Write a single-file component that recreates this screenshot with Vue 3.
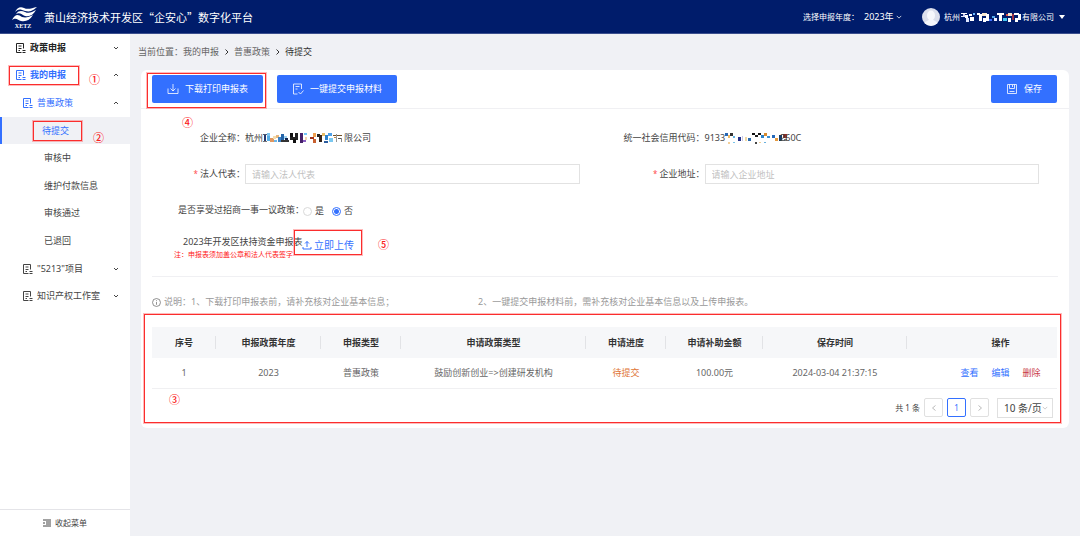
<script setup>
import { ref } from 'vue'

const year = ref('2023年')
const legal = ref('')
const address = ref('')
const enjoyed = ref('no')
const pageSize = ref('10 条/页')

const menu = [
  { label: '政策申报', level: 1, arrow: 'down' },
  { label: '我的申报', level: 1, arrow: 'up', active: true, mark: '①' },
  { label: '普惠政策', level: 2, arrow: 'up', active: true },
  { label: '待提交', level: 3, active: true, selected: true, mark: '②' },
  { label: '审核中', level: 3 },
  { label: '维护付款信息', level: 3 },
  { label: '审核通过', level: 3 },
  { label: '已退回', level: 3 },
  { label: '"5213"项目', level: 2, arrow: 'down' },
  { label: '知识产权工作室', level: 2, arrow: 'down' },
]

const columns = [
  { title: '序号', name: 'c-index' },
  { title: '申报政策年度', name: 'c-year' },
  { title: '申报类型', name: 'c-type' },
  { title: '申请政策类型', name: 'c-policy' },
  { title: '申请进度', name: 'c-state' },
  { title: '申请补助金额', name: 'c-amount' },
  { title: '保存时间', name: 'c-time' },
  { title: '操作', name: 'c-action' },
]

const nameMask = [
  [0, 2, 5, 1, '#555a70'], [1, 3, 2, 6, '#26386e'], [0, 9, 4, 1, '#777'], [4, 1, 3, 3, '#7cc4ee'], [4, 4, 3, 5, '#58aee6'], [7, 6, 4, 4, '#e0975f'], [10, 4, 3, 3, '#f4dcae'], [11, 8, 3, 2, '#6db6e8'],
  [13, 3, 3, 3, '#e8b87e'], [15, 5, 3, 5, '#3d82c4'], [18, 2, 3, 8, '#2464a8'], [21, 4, 3, 3, '#9fd3f2'], [22, 6, 3, 4, '#14244e'], [18, 8, 8, 2, '#333'],
  [27, 1, 3, 5, '#111'], [32, 1, 3, 5, '#222'], [27, 5, 8, 3, '#222'], [30, 7, 3, 4, '#111'], [37, 1, 3, 10, '#45206a'], [41, 1, 3, 2, '#6fc3f7'], [40, 8, 3, 2, '#8a5fc0'], [42, 5, 2, 3, '#f3d2b0'],
  [50, 1, 3, 4, '#f0a050'], [47, 5, 4, 2, '#a03018'], [50, 7, 3, 4, '#c8602f'], [54, 2, 3, 3, '#222'], [56, 3, 3, 7, '#34241b'], [59, 1, 3, 3, '#e8bc66'], [62, 3, 3, 5, '#2c82cd'], [65, 1, 4, 3, '#4da0e8'], [61, 9, 4, 2, '#2c5da0'], [66, 6, 4, 4, '#7ac8f0'],
  [70, 3, 9, 1, '#725128'], [73, 2, 1, 8, '#999'], [75, 6, 4, 1, '#555'], [78, 6, 1, 4, '#888'], [71, 5, 2, 1, '#c08a4a'],
]
const codeMask = [
  [0, 1, 3, 3, '#2866b2'], [3, 3, 2, 3, '#f0bb63'], [5, 1, 3, 3, '#333'], [8, 4, 2, 2, '#62b5e8'], [3, 10, 2, 2, '#f4cf99'], [8, 10, 2, 1, '#7ac4ea'],
  [13, 5, 3, 4, '#24328b'], [17, 4, 1, 5, '#c9c9e8'], [20, 5, 2, 4, '#f0d9a5'], [23, 6, 3, 3, '#2b6cae'], [27, 1, 3, 2, '#111'], [30, 3, 3, 2, '#222'], [33, 1, 3, 2, '#111'],
  [36, 3, 3, 3, '#2c82c8'], [39, 1, 3, 3, '#d98b2d'], [42, 4, 3, 2, '#3d90d0'], [30, 10, 2, 2, '#444'], [34, 10, 2, 1, '#f0cf92'], [39, 10, 2, 1, '#67afdd'],
  [47, 3, 3, 3, '#2468ba'], [50, 6, 3, 3, '#e79a3e'], [54, 3, 3, 6, '#183b66'], [58, 2, 4, 4, '#8e2e25'], [59, 7, 3, 2, '#777'],
]
const userMask = [
  [0, 2, 6, 1, '#fff'], [2, 3, 2, 3, '#cce'], [0, 5, 5, 1, '#dfe7ff'], [4, 4, 3, 3, '#fff'], [5, 7, 3, 4, '#dfe7ff'], [8, 3, 3, 2, '#fff'], [9, 6, 4, 4, '#fff'], [12, 2, 2, 2, '#68b8ff'],
  [16, 2, 3, 2, '#fff'], [18, 3, 3, 7, '#fff'], [21, 2, 5, 3, '#f8e8cf'], [22, 7, 3, 4, '#fff'], [25, 3, 3, 7, '#fff'], [28, 8, 3, 2, '#3f70ff'],
  [31, 5, 3, 2, '#51a7e8'], [33, 7, 3, 3, '#eef'], [36, 2, 7, 2, '#fff'], [38, 3, 3, 7, '#fff'], [42, 7, 4, 3, '#44c5ee'], [45, 3, 3, 2, '#d94f48'],
  [47, 2, 4, 3, '#f3e4d0'], [47, 7, 3, 4, '#fff'], [51, 3, 2, 6, '#9a3044'], [53, 2, 5, 2, '#fff'], [54, 7, 3, 4, '#fff'], [57, 3, 3, 6, '#fff'],
]
</script>

<template>
  <div class="page">
    <header class="topbar">
      <svg class="logo" viewBox="0 0 26 24" aria-label="XETZ">
        <path d="M3 6C5 2 8 0 12 2C16 4 20 2 25 1C23 3 21 4 19 5C16 6 13 5 10 4C7 3 5 4 3 6Z" fill="#fff" />
        <path d="M4 8C7 4 10 5 13 6C17 8 20 6 24 4C21 9 18 11 13 10C10 9 8 6 4 8Z" fill="#fff" />
        <path d="M0 14C3 8 6 8 10 11C14 12 17 11 21 9C18 14 14 16 9 15C6 14 4 11 0 14Z" fill="#fff" />
        <text x="11" y="22" text-anchor="middle" class="logo-text">XETZ</text>
      </svg>
      <h1>萧山经济技术开发区“企安心”数字化平台</h1>
      <label class="year-label" for="year">选择申报年度：</label>
      <span class="picker year">
        <select id="year" v-model="year"><option>2023年</option></select>
        <svg viewBox="0 0 8 8"><path d="M1 2.5L4 5.5L7 2.5" /></svg>
      </span>
      <svg class="avatar" viewBox="0 0 18 18">
        <circle cx="9" cy="9" r="9" fill="#dcdfec" />
        <ellipse cx="9" cy="7.500" rx="4" ry="5" fill="#f6f7fc" />
        <path d="M2.500 15C4 12.500 7 13 7 11H11C11 13 14 12.500 15.500 15A9 9 0 0 1 2.500 15Z" fill="#f6f7fc" />
      </svg>
      <button class="user" type="button">
        杭州<svg class="mask user-mask" viewBox="0 0 60 12"><rect v-for="(r, i) in userMask" :key="i" :x="r[0]" :y="r[1]" :width="r[2]" :height="r[3]" :fill="r[4]" /></svg>有限公司
        <svg class="caret" viewBox="0 0 6 4"><path d="M0 0H6L3 4Z" fill="#fff" /></svg>
      </button>
    </header>

    <div class="body">
      <aside class="sidebar">
        <nav class="menu">
          <a
            v-for="item in menu"
            :key="item.label"
            href="#"
            class="item"
            :class="['level-' + item.level, { active: item.active, selected: item.selected }]"
          >
            <svg v-if="item.level < 3" class="doc" viewBox="0 0 11 12">
              <path d="M8.500 6.500V1.500H1.500V10.500H6.500M3.500 4H6.500M3.500 6.500H6.500M3.500 8.500H5M7.500 8.500H10.500M7.500 10.500H10.500" />
            </svg>
            <span>{{ item.label }}</span>
            <svg v-if="item.arrow" class="arrow" viewBox="0 0 8 8">
              <path :d="item.arrow === 'down' ? 'M2 3L4 5L6 3' : 'M2 5L4 3L6 5'" />
            </svg>
            <i v-if="item.mark" class="frame"></i>
            <b v-if="item.mark" class="mark">{{ item.mark }}</b>
          </a>
        </nav>
        <button class="collapse" type="button">
          <svg viewBox="0 0 8 8"><path d="M0 1H8M3 3H8M3 5H8M0 7H8M1.500 3L.5 4L1.500 5" /></svg>
          收起菜单
        </button>
      </aside>

      <main>
        <nav class="crumbs">
          <span>当前位置：</span><a href="#">我的申报</a>
          <svg viewBox="0 0 6 8"><path d="M1.500 1.500L4 4L1.500 6.500" /></svg>
          <a href="#">普惠政策</a>
          <svg viewBox="0 0 6 8"><path d="M1.500 1.500L4 4L1.500 6.500" /></svg>
          <span class="here">待提交</span>
        </nav>

        <section class="card">
          <div class="toolbar">
            <div class="anchor download">
              <button type="button" class="primary">
                <svg viewBox="0 0 12 12"><path d="M6 1V8M3.500 5.500L6 8L8.500 5.500M1 5.500V10.500H11V5.500" /></svg>
                下载打印申报表
              </button>
              <i class="frame"></i>
              <b class="mark">④</b>
            </div>
            <button type="button" class="primary submit">
              <svg viewBox="0 0 12 12"><path d="M9.500 6V1H1.500V11H5.500M3.500 3.500H7.500M3.500 6H5.500M6.500 9L8.500 11L11.500 7.500" /></svg>
              一键提交申报材料
            </button>
            <button type="button" class="primary save">
              <svg viewBox="0 0 12 12"><path d="M1.500 1.500H10.500V10.500H1.500ZM3.500 1.500V5.500H8.500V1.500M6.500 2V4M3.500 8.500H8.500" /></svg>
              保存
            </button>
          </div>

          <form class="form" @submit.prevent>
            <div class="fields">
              <span class="label">企业全称：</span>
              <span class="value">杭州<svg class="mask name-mask" viewBox="0 0 81 12"><rect v-for="(r, i) in nameMask" :key="i" :x="r[0]" :y="r[1]" :width="r[2]" :height="r[3]" :fill="r[4]" /></svg>限公司</span>
              <span class="label">统一社会信用代码：</span>
              <span class="value">9133<svg class="mask code-mask" viewBox="0 0 62 12"><rect v-for="(r, i) in codeMask" :key="i" :x="r[0]" :y="r[1]" :width="r[2]" :height="r[3]" :fill="r[4]" /></svg>260C</span>
              <label class="label" for="legal"><em>*</em>法人代表：</label>
              <input id="legal" v-model="legal" type="text" placeholder="请输入法人代表" />
              <label class="label" for="address"><em>*</em>企业地址：</label>
              <input id="address" v-model="address" type="text" placeholder="请输入企业地址" />
            </div>
            <fieldset class="choice">
              <legend>是否享受过招商一事一议政策：</legend>
              <label><input v-model="enjoyed" type="radio" name="enjoyed" value="yes" />是</label>
              <label><input v-model="enjoyed" type="radio" name="enjoyed" value="no" />否</label>
            </fieldset>
            <div class="upload-row">
              <div class="upload-text">
                <span>2023年开发区扶持资金申报表</span>
                <small>注：申报表须加盖公章和法人代表签字</small>
              </div>
              <div class="anchor upload">
                <button type="button">
                  <svg viewBox="0 0 10 10"><path d="M5 7V1.500M3 3.500L5 1.500L7 3.500M1 7V9H9V7" /></svg>
                  立即上传
                </button>
                <i class="frame"></i>
                <b class="mark">⑤</b>
              </div>
            </div>
          </form>

          <p class="notes">
            <svg viewBox="0 0 10 10"><circle cx="5" cy="5" r="4.400" /><path d="M5 4.500V7.500M5 2.500V3.500" /></svg>
            <span class="note-one">说明：1、下载打印申报表前，请补充核对企业基本信息；</span>
            <span>2、一键提交申报材料前，需补充核对企业基本信息以及上传申报表。</span>
          </p>

          <div class="anchor list">
            <table>
              <colgroup><col v-for="c in columns" :key="c.name" :class="c.name" /></colgroup>
              <thead>
                <tr><th v-for="c in columns" :key="c.name" scope="col">{{ c.title }}</th></tr>
              </thead>
              <tbody>
                <tr>
                  <td>1</td>
                  <td>2023</td>
                  <td>普惠政策</td>
                  <td>鼓励创新创业=&gt;创建研发机构</td>
                  <td class="pending">待提交</td>
                  <td>100.00元</td>
                  <td>2024-03-04 21:37:15</td>
                  <td>
                    <div class="actions"><a href="#">查看</a><a href="#">编辑</a><a href="#" class="danger">删除</a></div>
                  </td>
                </tr>
              </tbody>
            </table>
            <div class="pager">
              <span>共 1 条</span>
              <button type="button" aria-label="上一页" disabled><svg viewBox="0 0 8 8"><path d="M5.500 1.500L2.500 4L5.500 6.500" /></svg></button>
              <button type="button" class="current">1</button>
              <button type="button" aria-label="下一页" disabled><svg viewBox="0 0 8 8"><path d="M2.500 1.500L5.500 4L2.500 6.500" /></svg></button>
              <span class="picker size">
                <select v-model="pageSize" aria-label="每页条数"><option>10 条/页</option></select>
                <svg viewBox="0 0 8 8"><path d="M1 2.5L4 5.5L7 2.5" /></svg>
              </span>
            </div>
            <i class="frame"></i>
            <b class="mark">③</b>
          </div>
        </section>
      </main>
    </div>
  </div>
</template>

<style>
body {
  background: #f0f1f5;
}
</style>

<style scoped>
* {
  box-sizing: border-box;
}
.page {
  display: flex;
  flex-direction: column;
  min-height: 100vh;
  font: 9px/14px "Noto Sans", "Noto Sans CJK SC", sans-serif;
  color: #444;
  background: #f0f1f5;
}
button,
input,
select {
  font: inherit;
  color: inherit;
  margin: 0;
}
button {
  padding: 0;
  border: 0;
  background: none;
}
a {
  color: inherit;
  text-decoration: none;
}
svg {
  flex: none;
  fill: none;
  stroke: currentColor;
}
.mask,
.avatar,
.logo,
.caret {
  stroke: none;
}
.topbar {
  display: flex;
  align-items: center;
  height: 34px;
  padding: 0 15px 0 12px;
  border-bottom: 1px solid #3b4f8e;
  background: #001c6b;
  color: #fff;
}
.logo {
  width: 26px;
  height: 24px;
  margin-top: 2px;
}
.logo-text {
  font: bold 6px "Liberation Serif", serif;
  fill: #fff;
}
h1 {
  flex: 1;
  margin: 0 0 0 6px;
  font: 11px/16px "Noto Sans CJK SC", sans-serif;
}
.year-label,
.user {
  font-size: 8px;
}
.picker {
  position: relative;
  display: flex;
  align-items: center;
}
.picker select {
  appearance: none;
  padding: 0;
  border: 0;
  outline: 0;
  background: none;
}
.picker svg {
  position: absolute;
  right: 0;
  width: 6px;
  height: 6px;
  pointer-events: none;
}
.year {
  width: 38px;
  margin: 0 20px 0 5px;
}
.year select {
  width: 100%;
}
.avatar {
  width: 18px;
  height: 18px;
  margin-right: 4px;
}
.user {
  display: flex;
  align-items: center;
}
.mask {
  height: 12px;
}
.user-mask {
  width: 62px;
}
.caret {
  width: 6px;
  height: 4px;
  margin-left: 5px;
}
.body {
  display: flex;
  flex: 1;
}
.sidebar {
  display: flex;
  flex-direction: column;
  flex: none;
  width: 130px;
  background: #fff;
}
.menu {
  display: grid;
  grid-auto-rows: 1fr;
  height: 276px;
}
.item {
  position: relative;
  display: flex;
  align-items: center;
  padding: 0 10px 0 15px;
}
.doc {
  width: 11px;
  height: 12px;
  margin-right: 4px;
}
.level-1 {
  font-weight: 600;
  color: #222;
}
.level-2 {
  padding-left: 22px;
}
.level-3 {
  padding-left: 44px;
}
.item.active {
  color: #3370ff;
}
.item.selected {
  padding-left: 40px;
  border-left: 2px solid #3370ff;
  background: #f0f1f5;
}
.arrow {
  width: 8px;
  height: 8px;
  margin-left: auto;
  color: #444;
}
.frame {
  position: absolute;
  border: 1px solid #fb2d2d;
  box-shadow: 0 0 0 1px rgba(255, 60, 60, 0.35);
  pointer-events: none;
}
.mark {
  position: absolute;
  font: 500 11px/12px "Noto Sans CJK SC", sans-serif;
  color: #fb2020;
}
.level-1 .frame {
  left: 9px;
  top: 4px;
  width: 70px;
  height: 19px;
}
.level-1 .mark {
  left: 89px;
  top: 11px;
}
.level-3 .frame {
  left: 31px;
  top: 4px;
  width: 49px;
  height: 20px;
}
.level-3 .mark {
  left: 91px;
  top: 14px;
}
.collapse {
  display: flex;
  align-items: center;
  gap: 4px;
  height: 27px;
  margin-top: auto;
  padding-left: 43px;
  border-top: 1px solid #e4e4e8;
  font-size: 8px;
}
.collapse svg {
  width: 8px;
  height: 8px;
}
main {
  flex: 1;
  min-width: 0;
  padding: 11px 11px 0;
}
.crumbs {
  display: flex;
  align-items: center;
  margin-left: -3px;
  color: #666;
}
.crumbs svg {
  width: 6px;
  height: 8px;
  margin: 0 4px 0 5px;
  color: #333;
}
.here {
  color: #333;
}
.card {
  margin-top: 11px;
  padding-bottom: 5px;
  border-radius: 6px;
  background: #fff;
}
.toolbar {
  display: flex;
  padding: 5px 12px 5px 11px;
  border-bottom: 1px solid #f0f0f3;
}
.anchor {
  position: relative;
}
.primary {
  display: flex;
  align-items: center;
  justify-content: center;
  gap: 6px;
  height: 28px;
  padding: 0 15px;
  border-radius: 2px;
  background: #3370ff;
  color: #fff;
}
.primary svg {
  width: 12px;
  height: 12px;
  stroke-width: 0.8;
}
.submit {
  margin-left: 14px;
}
.save {
  margin-left: auto;
}
.download .frame {
  inset: -2px -3px -5px -5px;
}
.download .mark {
  left: 30px;
  top: 41px;
}
.form {
  margin: 0 11px;
  padding: 19px 0 15px;
  border-bottom: 1px solid #f0f0f3;
}
.fields {
  display: grid;
  grid-template-columns: 93px 1fr 125px 1fr;
  grid-auto-rows: 20px;
  row-gap: 16px;
  align-items: center;
  padding-right: 19px;
}
.label {
  text-align: right;
}
.label em {
  margin-right: 2px;
  font-size: 8px;
  font-style: normal;
  color: #ff4d4f;
}
.value {
  display: flex;
  align-items: center;
}
.name-mask {
  width: 81px;
}
.code-mask {
  width: 62px;
  margin-right: -7px;
}
.fields input {
  width: 100%;
  height: 20px;
  padding: 0 6px;
  border: 1px solid #e2e2e2;
  outline: 0;
  background: #fff;
}
.fields input::placeholder {
  color: #bfbfbf;
}
.choice {
  display: flex;
  align-items: center;
  height: 20px;
  margin: 16px 0 0;
  padding: 0 0 0 26px;
  border: 0;
}
.choice legend {
  float: left;
  padding: 0;
}
.choice label {
  display: flex;
  align-items: center;
  gap: 3px;
  margin: 2px 9px 0 -1px;
}
.choice input {
  appearance: none;
  width: 9px;
  height: 9px;
  border: 1px solid #d9d9d9;
  border-radius: 50%;
}
.choice input:checked {
  border-color: #3370ff;
  background: radial-gradient(circle, #3370ff 2px, #fff 3px);
}
.upload-row {
  display: flex;
  align-items: flex-start;
  margin-top: 15px;
  padding-left: 22px;
}
.upload-text {
  display: flex;
  flex-direction: column;
  width: 128px;
  white-space: nowrap;
}
.upload-text span {
  margin-left: 9px;
}
.upload-text small {
  font-size: 7px;
  line-height: 12px;
  color: #ff1a1a;
}
.upload button {
  display: flex;
  align-items: center;
  gap: 2px;
  height: 20px;
  font-size: 10px;
  color: #3370ff;
}
.upload svg {
  width: 10px;
  height: 10px;
}
.upload .frame {
  inset: -5px -8px 0 -8px;
}
.upload .mark {
  left: 76px;
  top: 3px;
}
.notes {
  display: flex;
  align-items: center;
  margin: 18px 11px 0;
  color: #999;
}
.notes svg {
  width: 9px;
  height: 9px;
  margin-right: 3px;
  color: #666;
  stroke-width: 0.8;
}
.note-one {
  width: 314px;
}
.list {
  margin: 18px 12px 0 11px;
}
.list .frame {
  inset: -13px -4px 0 -8px;
}
.list .mark {
  left: 17px;
  top: 66px;
}
table {
  width: 100%;
  table-layout: fixed;
  border-collapse: collapse;
}
.c-index {
  width: 64px;
}
.c-year {
  width: 105px;
}
.c-type,
.c-state {
  width: 80px;
}
.c-amount {
  width: 97px;
}
.c-time {
  width: 144px;
}
.c-action {
  width: 150px;
}
th,
td {
  padding: 0;
  text-align: center;
}
th {
  position: relative;
  height: 31px;
  background: #f6f7f9;
  font-weight: 600;
  color: #333;
}
th:not(:last-child)::after {
  content: "";
  position: absolute;
  right: 0;
  top: 9px;
  width: 1px;
  height: 13px;
  background: #e2e3e6;
}
td {
  height: 30px;
  border-bottom: 1px solid #f0f0f2;
  color: #666;
}
th:last-child,
td:last-child {
  padding-left: 37px;
}
.pending {
  color: #e07434;
}
.actions {
  display: flex;
  justify-content: center;
  gap: 13px;
  color: #3370ff;
}
.danger {
  color: #c93a46;
}
.pager {
  display: flex;
  align-items: center;
  justify-content: flex-end;
  gap: 4px;
  padding: 9px 4px 5px 0;
  font-size: 8px;
}
.pager button {
  display: flex;
  align-items: center;
  justify-content: center;
  width: 19px;
  height: 19px;
  border: 1px solid #e0e0e0;
  border-radius: 2px;
  color: #bbb;
}
.pager button svg {
  width: 8px;
  height: 8px;
}
.pager .current {
  border-color: #3370ff;
  color: #3370ff;
}
.size {
  width: 56px;
  height: 20px;
  margin-left: 4px;
  border: 1px solid #e0e0e0;
  font-size: 10px;
}
.size select {
  width: 100%;
  padding-left: 6px;
}
.size svg {
  right: 4px;
  color: #bbb;
}
</style>
